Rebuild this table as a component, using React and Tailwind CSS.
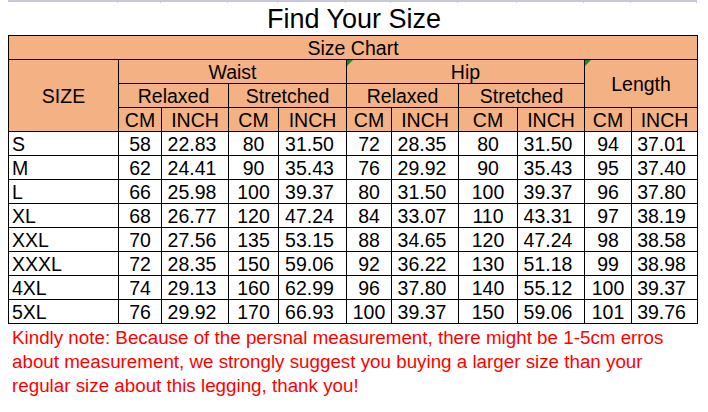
const cols = [110, 43, 67, 50, 68, 45, 67, 59, 67, 47, 66]

const rows = [
  ['S', '58', '22.83', '80', '31.50', '72', '28.35', '80', '31.50', '94', '37.01'],
  ['M', '62', '24.41', '90', '35.43', '76', '29.92', '90', '35.43', '95', '37.40'],
  ['L', '66', '25.98', '100', '39.37', '80', '31.50', '100', '39.37', '96', '37.80'],
  ['XL', '68', '26.77', '120', '47.24', '84', '33.07', '110', '43.31', '97', '38.19'],
  ['XXL', '70', '27.56', '135', '53.15', '88', '34.65', '120', '47.24', '98', '38.58'],
  ['XXXL', '72', '28.35', '150', '59.06', '92', '36.22', '130', '51.18', '99', '38.98'],
  ['4XL', '74', '29.13', '160', '62.99', '96', '37.80', '140', '55.12', '100', '39.37'],
  ['5XL', '76', '29.92', '170', '66.93', '100', '39.37', '150', '59.06', '101', '39.76'],
]

const cell = 'border border-black h-[24px] p-0 leading-[22px] text-center font-normal'
const head = cell + ' bg-[#f4b183]'

function Marker() {
  return (
    <span className="absolute left-0 top-0 w-0 h-0 border-t-[6px] border-t-[#1f8a1f] border-r-[6px] border-r-transparent" />
  )
}

export default function App() {
  return (
    <div
      className="w-[708px] h-[412px] bg-white overflow-hidden text-black"
      style={{ fontFamily: '"Liberation Sans", Arial, sans-serif' }}
    >
      <div className="flex h-[3px] pl-[8px]">
        {cols.map((w, i) => (
          <div
            key={i}
            style={{ width: w }}
            className="border-r border-r-[#c8c8d8] border-t-2 border-t-[#c8c8d8]"
          />
        ))}
      </div>
      <div className="h-[32px] leading-[32px] text-center text-[27px]">Find Your Size</div>
      <table className="ml-[8px] table-fixed border-collapse text-[19.5px] w-[689px]">
        <colgroup>
          {cols.map((w, i) => (
            <col key={i} style={{ width: w }} />
          ))}
        </colgroup>
        <thead>
          <tr>
            <th colSpan={11} className={head}>Size Chart</th>
          </tr>
          <tr>
            <th rowSpan={3} className={head}>SIZE</th>
            <th colSpan={4} className={head}>Waist</th>
            <th colSpan={4} className={head + ' relative'}>
              <Marker />
              Hip
            </th>
            <th colSpan={2} rowSpan={2} className={head + ' relative'}>
              <Marker />
              Length
            </th>
          </tr>
          <tr>
            <th colSpan={2} className={head}>Relaxed</th>
            <th colSpan={2} className={head}>Stretched</th>
            <th colSpan={2} className={head}>Relaxed</th>
            <th colSpan={2} className={head}>Stretched</th>
          </tr>
          <tr>
            {['CM', 'INCH', 'CM', 'INCH', 'CM', 'INCH', 'CM', 'INCH', 'CM', 'INCH'].map((t, i) => (
              <th key={i} className={head}>{t}</th>
            ))}
          </tr>
        </thead>
        <tbody>
          {rows.map((r) => (
            <tr key={r[0]}>
              {r.map((v, i) => (
                <td
                  key={i}
                  className={
                    cell +
                    (i === 0 ? ' !text-left pl-[3px]' : i % 2 === 0 ? ' pr-[6px]' : '')
                  }
                >
                  {v}
                </td>
              ))}
            </tr>
          ))}
        </tbody>
      </table>
      <p className="mt-[2px] pl-[12px] pr-[20px] text-[18.8px] leading-[24px] text-[#ff0000]">
        Kindly note: Because of the persnal measurement, there might be 1-5cm erros about
        measurement, we strongly suggest you buying a larger size than your regular size about
        this legging, thank you!
      </p>
    </div>
  )
}
